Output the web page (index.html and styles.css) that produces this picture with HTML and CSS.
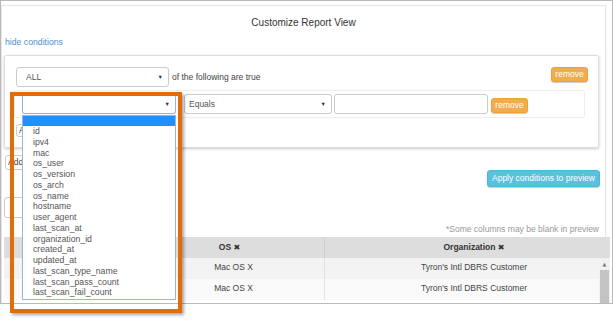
FILE: index.html
```html
<!DOCTYPE html>
<html>
<head>
<meta charset="utf-8">
<link rel="stylesheet" href="styles.css">
</head>
<body>
<div class="page">
  <div class="frame">
    <div class="dialog">
      <div class="title">Customize Report View</div>
      <div class="toggle-line"><a class="toggle">hide conditions</a></div>
      <div class="cond-panel">
        <div class="cond-head">
          <div class="select sel-all"><span>ALL</span><span class="caret">▼</span></div>
          <span class="cond-label">of the following are true</span>
          <button class="btn btn-warning btn-remove-top">remove</button>
        </div>
        <div class="rule">
          <div class="select sel-field focus"><span></span><span class="caret">▼</span></div>
          <div class="select sel-op"><span>Equals</span><span class="caret">▼</span></div>
          <div class="text-input"></div>
          <button class="btn btn-warning btn-remove-rule">remove</button>
        </div>
        <div class="add-line"><button class="btn btn-default btn-add-cond">Add</button></div>
      </div>
      <div class="group-line"><button class="btn btn-default btn-add-group">Add</button></div>
      <div class="apply-line"><button class="btn btn-info btn-apply">Apply conditions to preview</button></div>
      <div class="col-select"></div>
      <div class="note">*Some columns may be blank in preview</div>
      <div class="table">
        <div class="thead">
          <div class="th c1"></div>
          <div class="th c2">OS <span class="x">✖</span></div>
          <div class="th c3">Organization <span class="x">✖</span></div>
        </div>
        <div class="tbody">
          <div class="rows">
            <div class="tr odd">
              <div class="td c1"></div>
              <div class="td c2">Mac OS X</div>
              <div class="td c3">Tyron's Intl DBRS Customer</div>
            </div>
            <div class="tr even">
              <div class="td c1"></div>
              <div class="td c2">Mac OS X</div>
              <div class="td c3">Tyron's Intl DBRS Customer</div>
            </div>
          </div>
          <div class="scrollbar">
            <div class="sb-arrow">▲</div>
            <div class="sb-thumb"></div>
          </div>
        </div>
      </div>
    </div>
  </div>

  <ul class="dropdown">
    <li class="opt selected">&nbsp;</li>
    <li class="opt">id</li>
    <li class="opt">ipv4</li>
    <li class="opt">mac</li>
    <li class="opt">os_user</li>
    <li class="opt">os_version</li>
    <li class="opt">os_arch</li>
    <li class="opt">os_name</li>
    <li class="opt">hostname</li>
    <li class="opt">user_agent</li>
    <li class="opt">last_scan_at</li>
    <li class="opt">organization_id</li>
    <li class="opt">created_at</li>
    <li class="opt">updated_at</li>
    <li class="opt">last_scan_type_name</li>
    <li class="opt">last_scan_pass_count</li>
    <li class="opt">last_scan_fail_count</li>
  </ul>
  <div class="highlight"></div>
</div>
</body>
</html>
```

FILE: styles.css
```css
* { box-sizing: border-box; }
html, body { margin: 0; padding: 0; background: #fff; }
body {
  font-family: "Liberation Sans", Arial, "DejaVu Sans", sans-serif;
  font-size: 8.5px;
  color: #555;
}
.page { position: relative; width: 613px; height: 320px; }
.frame {
  width: 613px;
  height: 304px;
  border: 1px solid #b9b9b9;
  overflow: hidden;
}
.dialog {
  margin: 4px 6px 0 0;
  height: 310px;
  border: 1px solid #e6e6e6;
  box-shadow: 0 1px 2px rgba(0,0,0,0.08);
}
.title {
  margin-top: 10px;
  height: 14px;
  line-height: 14px;
  text-align: center;
  font-size: 10px;
  color: #333;
}
.toggle-line { margin-top: 6px; height: 12px; line-height: 12px; padding-left: 3px; }
.toggle { color: #4a8fd3; font-size: 8.7px; }

.cond-panel {
  margin: 7px 0 0 2px;
  width: 595px;
  border: 1px solid #ddd;
  border-radius: 2px;
  box-shadow: 0 1px 3px rgba(0,0,0,0.22);
  padding: 11px 10px 10px 11px;
}
.cond-head { display: flex; align-items: flex-start; height: 20px; }
.select {
  display: flex;
  align-items: center;
  justify-content: space-between;
  height: 20px;
  border: 1px solid #ccc;
  border-radius: 3px;
  background: #fff;
  color: #555;
  padding: 0 5px 0 9px;
}
.caret { font-size: 5.5px; color: #333; }
.sel-all { width: 153px; }
.cond-label { margin-left: 3px; line-height: 20px; color: #444; }
.btn {
  font-family: inherit;
  font-size: 8.5px;
  border-radius: 3px;
  padding: 0;
  margin: 0;
  line-height: 13px;
  cursor: pointer;
}
.btn-warning {
  background: #f0ad4e;
  border: 1px solid #eea236;
  color: #fff;
  box-shadow: 0 1px 1px rgba(0,0,0,0.2);
}
.btn-remove-top { margin-left: auto; width: 37px; height: 15px; }
.rule {
  margin: 3px 3px 0 -2px;
  height: 28px;
  border: 1px solid #eee;
  border-radius: 2px;
  padding: 3px 7px;
  display: flex;
  align-items: flex-start;
}
.sel-field { width: 154px; }
.sel-field.focus { border-color: #8fb5e3; box-shadow: 0 0 1px rgba(102,175,233,0.6); }
.sel-op { width: 148px; margin-left: 8px; padding-left: 4px; }
.text-input {
  width: 154px;
  height: 20px;
  margin-left: 2px;
  border: 1px solid #ccc;
  border-radius: 3px;
}
.btn-remove-rule { margin: 4px 0 0 3px; width: 37px; height: 15px; }
.add-line { margin-top: 6px; height: 13px; }
.btn-default {
  background: #fff;
  border: 1px solid #ccc;
  color: #444;
}
.btn-add-cond { height: 13px; line-height: 11px; padding: 0 20px 0 2px; }
.group-line { margin: 7px 0 0 3px; height: 15px; }
.btn-add-group { height: 15px; line-height: 13px; padding: 0 24px 0 2px; }
.apply-line { display: flex; justify-content: flex-end; margin-right: 5px; }
.btn-info {
  background: #5bc0de;
  border: 1px solid #46b8da;
  color: #fff;
  box-shadow: 0 1px 1px rgba(0,0,0,0.2);
}
.btn-apply { width: 113px; height: 17px; line-height: 15px; }
.col-select {
  margin: 10px 0 0 2px;
  width: 150px;
  height: 21px;
  border: 1px solid #ccc;
  border-radius: 3px;
}
.note {
  margin: 5px 6px 0 0;
  height: 12px;
  line-height: 12px;
  text-align: right;
  color: #999;
}
.table {
  margin: 2px -6px 0 2px;
  width: 606px;
}
.thead {
  display: flex;
  height: 21px;
  background: #dddddd;
  font-weight: bold;
  color: #333;
}
.th { line-height: 21px; text-align: center; }
.x { font-family: "DejaVu Sans", sans-serif; font-size: 8px; }
.thead .c1 { width: 139px; }
.thead .c2 { width: 181px; padding-right: 8px; }
.thead .c3 { flex: 1; border-left: 1px solid #cfcfcf; padding-left: 13px; }
.tbody { display: flex; height: 45px; }
.rows { flex: 1; }
.tr { display: flex; height: 21px; }
.tr.odd { background: #f3f3f3; }
.tr.even { background: #fafafa; }
.td { line-height: 19px; text-align: center; color: #444; }
.tr .c1 { width: 139px; border-right: 1px solid #e2e2e2; }
.tr .c2 { width: 181px; }
.tr .c3 { flex: 1; border-left: 1px solid #e2e2e2; padding-left: 24px; }
.scrollbar { width: 11px; background: #f1f1f1; display: flex; flex-direction: column; align-items: center; }
.sb-arrow { font-size: 5px; color: #777; height: 12px; line-height: 12px; font-family: "DejaVu Sans", sans-serif; }
.sb-thumb { width: 9px; flex: 1; background: #c3c3c3; }

.dropdown {
  position: absolute;
  left: 22px;
  top: 115px;
  width: 154px;
  height: 185px;
  margin: 0;
  padding: 0;
  list-style: none;
  background: #fff;
  border: 1px solid #9db6d8;
  font-size: 8.7px;
  color: #555;
}
.opt { height: 10.77px; line-height: 10.77px; padding-left: 10px; white-space: nowrap; }
.opt.selected { height: 10px; background: #1e90ff; }
.highlight {
  position: absolute;
  left: 10px;
  top: 92px;
  width: 172px;
  height: 221px;
  border: 4px solid #e36c09;
  box-shadow: 2px 2px 3px rgba(0,0,0,0.35);
  pointer-events: none;
}
```
